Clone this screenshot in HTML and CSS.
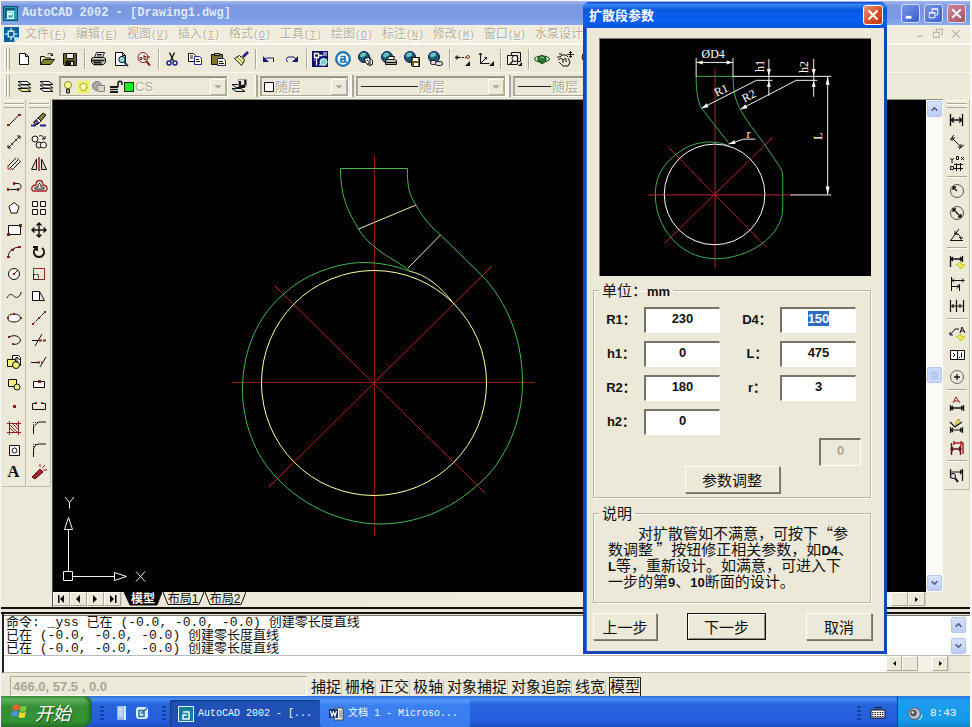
FILE: index.html
```html
<!DOCTYPE html>
<html lang="zh-CN">
<head>
<meta charset="utf-8">
<title>AutoCAD 2002 - [Drawing1.dwg]</title>
<link rel="stylesheet" href="styles.css">
</head>
<body>
<header class="titlebar">
  <svg class="app-logo" viewBox="0 0 16 16"><rect width="16" height="16" fill="#0b4a66"/><rect x="1" y="1" width="14" height="14" fill="#2c9ab5"/><path d="M2 2h11v2H4v9H2z" fill="#0c5673"/><path d="M5 6h6v7H5V9h4V8H5z" fill="none" stroke="#e9fbff" stroke-width="1.500"/></svg>
  <h1>AutoCAD 2002 - [Drawing1.dwg]</h1>
  <div class="window-buttons">
    <button type="button" aria-label="最小化"><svg viewBox="0 0 18 18"><path d="M4 13h6" stroke="#fff" stroke-width="3"/></svg></button>
    <button type="button" aria-label="还原"><svg viewBox="0 0 18 18"><path d="M7.500 7V4.500h6v6H11M4.500 8.500h6v5h-6zM4 8h7M7 4h7" fill="none" stroke="#fff"/></svg></button>
    <button type="button" class="close" aria-label="关闭"><svg viewBox="0 0 18 18"><path d="M4.500 4.500l9 9M13.500 4.500l-9 9" stroke="#fff" stroke-width="2"/></svg></button>
  </div>
</header>

<nav class="menubar">
  <svg class="doc-logo" viewBox="0 0 16 16"><path d="M0 0h16v11l-5 5H0z" fill="#0a5f96"/><path d="M16 11h-5v5z" fill="#d8ecf8"/><path d="M4.500 4.500h6v6h-6zM7.500 1v3M7.500 11v3M1 7.500h3M11 7.500h3" fill="none" stroke="#c8f0ff" stroke-width="1.400"/></svg>
  <button type="button">文件<span>(<u>F</u>)</span></button>
  <button type="button">编辑<span>(<u>E</u>)</span></button>
  <button type="button">视图<span>(<u>V</u>)</span></button>
  <button type="button">插入<span>(<u>I</u>)</span></button>
  <button type="button">格式<span>(<u>O</u>)</span></button>
  <button type="button">工具<span>(<u>T</u>)</span></button>
  <button type="button">绘图<span>(<u>D</u>)</span></button>
  <button type="button">标注<span>(<u>N</u>)</span></button>
  <button type="button">修改<span>(<u>M</u>)</span></button>
  <button type="button">窗口<span>(<u>W</u>)</span></button>
  <button type="button">水泵设计</button>
  <svg class="doc-controls" viewBox="0 0 50 12"><g fill="none" stroke="#fff"><path d="M4 9.500h6M23.500 4V2.500h6v5H28M20.500 5.500h6v5h-6zM39.500 3.500l7 7M46.500 3.500l-7 7"/></g><path d="M3 8.500h6M22.500 4V1.500h6v5H27M19.500 4.500h6v5h-6z" fill="none" stroke="#bdb9aa" stroke-width="1.300"/><path d="M38.500 2.500l7 7M45.500 2.500l-7 7" stroke="#bdb9aa" stroke-width="1.600"/></svg>
</nav>

<div class="toolbar">
  <i class="grip"></i>
  <button type="button" aria-label="新建"><svg class="i" viewBox="0 0 18 18"><path d="M4.500 3.500h6l3 3v8h-9z" fill="#fff"/><path d="M10.500 3.500v3h3"/></svg></button>
  <button type="button" aria-label="打开"><svg class="i" viewBox="0 0 18 18"><path d="M2.500 14.500v-8h4l1 1.500h5v2" fill="#f4f0a0"/><path d="M2.500 14.500l3-5h11l-4 5z" fill="#87832a"/><path d="M9.500 4.500c2-2 4-1 5 1m0-2v2h-2"/></svg></button>
  <button type="button" aria-label="保存"><svg class="i" viewBox="0 0 18 18"><path d="M2.500 3.500h13v12h-12l-1-1z" fill="#6b6a23"/><path d="M5.500 3.500h7v5h-7z" fill="#eee"/><path d="M5 11h8v4H5z" fill="#111"/><path d="M10 12h2v3h-2z" fill="#eee" stroke="none"/></svg></button>
  <i class="sep"></i>
  <button type="button" aria-label="打印"><svg class="i" viewBox="0 0 18 18"><path d="M5.500 7.500l2-5h8l-2 5z" fill="#fff"/><path d="M2.500 8.500l2-1h10l2 1v4l-2 2h-10l-2-2z" fill="#c9c5b3"/><path d="M2.500 10.500h13M4.500 12.500h8M5 14.500h9" stroke-width="1.500"/><path d="M8 4.500h5M7.500 6h5"/></svg></button>
  <button type="button" aria-label="打印预览"><svg class="i" viewBox="0 0 18 18"><path d="M3.500 2.500h7l3 3v10h-10z" fill="#fff"/><path d="M10.500 2.500v3h3"/><circle cx="10" cy="9.500" r="3.200" fill="#8fd8dc"/><path d="M12 12l4 4" stroke="#174d6b" stroke-width="2"/></svg></button>
  <button type="button" aria-label="查找"><svg class="i" viewBox="0 0 18 18"><circle cx="8" cy="7.500" r="5" fill="#fff" stroke="#7e1616"/><path d="M5 7.500h2v2H5zM9 4.500v5h2v-3H9M12 7h3" stroke="#7e1616"/><path d="M11 11l4 4.500" stroke="#a01c1c" stroke-width="2"/></svg></button>
  <i class="sep"></i>
  <button type="button" aria-label="剪切"><svg class="i" viewBox="0 0 18 18"><path d="M6.500 2.500l4 8.500M11.500 2.500l-4 8.500" stroke-width="1.300"/><circle cx="6" cy="13" r="2" stroke="#20248c" stroke-width="1.500"/><circle cx="12" cy="13" r="2" stroke="#20248c" stroke-width="1.500"/></svg></button>
  <button type="button" aria-label="复制"><svg class="i" viewBox="0 0 18 18"><path d="M2.500 3.500h5l2 2v6h-7z" fill="#fff"/><path d="M8.500 6.500h5l2 2v6h-7z" fill="#fff" stroke="#20248c"/><path d="M4 6h3M4 8h3M10 9.500h3M10 11.500h4"/></svg></button>
  <button type="button" aria-label="粘贴"><svg class="i" viewBox="0 0 18 18"><path d="M2.500 4.500h11v10h-11z" fill="#7c772c"/><path d="M5.500 5.500v-2h5v2z" fill="#ccc47c"/><path d="M8.500 8.500h6l2 2v5h-8z" fill="#fff" stroke="#20248c"/><path d="M10 11.500h4M10 13.500h5"/></svg></button>
  <button type="button" aria-label="特性匹配"><svg class="i" viewBox="0 0 18 18"><path d="M2.500 8.500l5-3 5 5-3 5z" fill="#ffffc0"/><path d="M5 7l6 6M4 9.500l5 5" stroke="#77712c"/><path d="M10 8l6-6" stroke="#20248c" stroke-width="2.500"/><path d="M9 6.500l3.500 3.500" stroke="#8c8742" stroke-width="2"/></svg></button>
  <i class="sep"></i>
  <button type="button" aria-label="放弃"><svg class="i" viewBox="0 0 18 18"><path d="M3 6v6h6z" fill="#171780" stroke="none"/><path d="M6 8h7.500v4" stroke="#171780"/></svg></button>
  <button type="button" aria-label="重做"><svg class="i" viewBox="0 0 18 18"><path d="M15 6v6H9z" fill="#171780" stroke="none"/><path d="M13 9l-2-2H5L3.500 8.500v2L5 12" stroke="#171780"/></svg></button>
  <i class="sep"></i>
  <button type="button" aria-label="设计中心"><svg class="i" viewBox="0 0 18 18"><path d="M1 1h16v16H1z" fill="#10106c" stroke="none"/><path d="M3.500 3.500h4v4h-4zM7.500 5.500h4M5.500 7.500v8" stroke="#fff" stroke-width="1.300"/><path d="M12 3h4M12 5h4M3 10h1M8 15h2" stroke="#fff"/><circle cx="12.500" cy="12" r="3.500" fill="#7bd1cf" stroke="#e8ffff"/></svg></button>
  <button type="button" aria-label="今日"><svg class="i" viewBox="0 0 18 18"><circle cx="9" cy="9" r="6.800" fill="#fff" stroke="#1c73bd" stroke-width="2.300"/><path d="M6.500 6.500h4.500v5.500H7V9.200h4M11 12h2" stroke="#1c73bd" stroke-width="1.700"/></svg></button>
  <button type="button" aria-label="网上会议"><svg class="i" viewBox="0 0 18 18"><circle cx="7" cy="7" r="5.500" fill="#155a75" stroke="#101860"/><path d="M3 5c2-3 5-3 6-1s-2 2-3 3-3 0-3-2" fill="#66c3b9" stroke="none"/><path d="M7.500 8.500l4-1 4 3v4l-3 1-4-3z" fill="#fff"/><path d="M10 10l3 3M13 7v9M10 15l2-2"/></svg></button>
  <button type="button" aria-label="发布"><svg class="i" viewBox="0 0 18 18"><circle cx="7" cy="7" r="5.500" fill="#155a75" stroke="#101860"/><path d="M3 5c2-3 5-3 6-1s-2 2-3 3-3 0-3-2" fill="#66c3b9" stroke="none"/><path d="M7.500 9.500l1-3h6l-1 3" fill="#fff"/><path d="M5.500 10.500l2-1h7l2 1v4h-11z" fill="#ddd9c8"/><path d="M6 12.500h10" stroke-width="1.500"/></svg></button>
  <button type="button" aria-label="电子传递"><svg class="i" viewBox="0 0 18 18"><circle cx="7" cy="7" r="5.500" fill="#155a75" stroke="#101860"/><path d="M3 5c2-3 5-3 6-1s-2 2-3 3-3 0-3-2" fill="#66c3b9" stroke="none"/><path d="M8.500 7.500h8v9h-7l-1-1z" fill="#755b25"/><path d="M10 8h5v3h-5zM11 13h4v3h-4z" fill="#fff" stroke="none"/></svg></button>
  <button type="button" aria-label="超级链接"><svg class="i" viewBox="0 0 18 18"><circle cx="8" cy="7" r="5.500" fill="#155a75" stroke="#101860"/><path d="M4 5c2-3 5-3 6-1s-2 2-3 3-3 0-3-2" fill="#66c3b9" stroke="none"/><rect x="4.500" y="10.500" width="6" height="4" rx="2" fill="#ddd"/><rect x="9.500" y="11.500" width="7" height="4" rx="2" fill="#ddd"/></svg></button>
  <i class="sep"></i>
  <button type="button" aria-label="临时追踪"><svg class="i" viewBox="0 0 18 18"><path d="M1 7.500h4M3 5.500v4" stroke-width="1.300"/><path d="M5 7.500h9" stroke-dasharray="2 1"/><circle cx="14" cy="7" r="1.500" stroke="#8a3a1b"/><path d="M16 11v5h-5z" fill="#111" stroke="none"/></svg></button>
  <button type="button" aria-label="坐标系"><svg class="i" viewBox="0 0 18 18"><path d="M3.500 3v10.500h9M3.500 13.500l6-6M2 5l1.500-2L5 5M7.500 7.500h2v2"/><path d="M17 11v5h-5z" fill="#111" stroke="none"/></svg></button>
  <i class="sep"></i>
  <button type="button" aria-label="缩放窗口"><svg class="i" viewBox="0 0 18 18"><path d="M6.500 2.500h9v9h-9z"/><path d="M2.500 5.500h10v9h-10z" fill="#f5f3e4"/><circle cx="10" cy="8.500" r="3"/><path d="M8 11l-3 3" stroke-width="1.500"/><path d="M17 12v4h-4z" fill="#111" stroke="none"/></svg></button>
  <i class="sep"></i>
  <button type="button" aria-label="三维动态观察"><svg class="i" viewBox="0 0 18 18"><ellipse cx="9" cy="9" rx="7.500" ry="3" stroke="#123d12"/><path d="M5 8l4-3 4 3v3l-4 3-4-3z" fill="#267a32" stroke="#0e4a18"/><path d="M7 8l2-1 2 1" stroke="#8cd990"/></svg></button>
  <button type="button" aria-label="实时平移"><svg class="i" viewBox="0 0 18 18"><path d="M1 7h3l2-2h4l2 2M3 4h3M2 10l3-2 2 2 3-2M3 12l4 4h5l2-4-2-4M7 10v3M10 9v3"/><path d="M14.500 1v7M11 4.500h7M13 2.500h3M13 6.500h3"/></svg></button>
  <button type="button" aria-label="实时缩放"><svg class="i" viewBox="0 0 18 18"><circle cx="7" cy="7" r="4"/><path d="M10 10l5 5" stroke-width="2"/></svg></button>
</div>

<div class="toolbar props">
  <i class="grip"></i>
  <button type="button" aria-label="图层"><svg class="i" viewBox="0 0 18 18"><path d="M3 4.500h9l4 3H7zM3 8h9l4 3H7z" fill="#fff"/><path d="M3 11.500h9l4 3H7z" fill="#f8f36f"/></svg></button>
  <button type="button" aria-label="当前图层"><svg class="i" viewBox="0 0 18 18"><path d="M2 4.500h9l4 3H6zM2 8h9l4 3H6z" fill="#fff"/><path d="M2 11.500h9l4 3H6z" fill="#fff"/></svg></button>
  <div class="combo layer">
    <svg class="layer-state" viewBox="0 0 74 16"><circle cx="7" cy="6" r="3.500" fill="#ffff91" stroke="#8b862d"/><path d="M5.500 10h3v4h-3z" fill="#aba65a" stroke="#222"/><rect x="17" y="2" width="11" height="12" fill="#f4ef6d"/><circle cx="22.500" cy="8" r="3.500" fill="#ffffa8" stroke="#77722b" stroke-dasharray="2 1"/><circle cx="36" cy="7" r="4.500" fill="#aaa" stroke="#777"/><path d="M36.500 6.500h7v6h-7z" fill="#d8d4c5" stroke="#888"/><path d="M49 7h8v7h-8z" fill="#171717"/><path d="M49 9.500h8M49 11.500h8" stroke="#d0cdbd"/><path d="M57 8V4.500c0-3 4-3 4 0V6" fill="none" stroke="#171717" stroke-width="1.500"/><rect x="63.500" y="3.500" width="9" height="9" fill="#00f322" stroke="#173017"/></svg>
    <select aria-label="图层"><option>CS</option></select>
    <svg class="drop" viewBox="0 0 16 16"><path d="M4 6h8l-4 4z"/></svg>
  </div>
  <button type="button" aria-label="上一个图层"><svg class="i" viewBox="0 0 18 18"><path d="M1 7.500h9l4 3H5zM1 11.500h9l4 3H5z" fill="#d6e8e4"/><path d="M7.500 2.500h8v7h-8z" fill="#e6e3d2" stroke="#999"/><path d="M10 10c4-1 5-3 4-7M9 4v5h5" stroke-width="2"/></svg></button>
  <i class="grip thin"></i>
  <div class="combo color">
    <svg class="swatch" viewBox="0 0 12 12"><path d="M1.500 1.500h9v9h-9z" fill="#fff" stroke="#111"/></svg>
    <select aria-label="颜色"><option>随层</option></select>
    <svg class="drop" viewBox="0 0 16 16"><path d="M4 6h8l-4 4z"/></svg>
  </div>
  <i class="grip thin"></i>
  <div class="combo line">
    <span class="sample"></span>
    <select aria-label="线型"><option>随层</option></select>
    <svg class="drop" viewBox="0 0 16 16"><path d="M4 6h8l-4 4z"/></svg>
  </div>
  <i class="grip thin"></i>
  <div class="combo weight">
    <span class="sample short"></span>
    <select aria-label="线宽"><option>随层</option></select>
    <svg class="drop" viewBox="0 0 16 16"><path d="M4 6h8l-4 4z"/></svg>
  </div>
</div>

<main class="workspace">
  <div class="palette">
    <i class="hgrip"></i>
    <button type="button" aria-label="直线"><svg class="i" viewBox="0 0 18 18"><path d="M4 14L14 4"/><path d="M2 13h3v2H2zM13 3h3v2h-3z" class="r"/></svg></button>
    <button type="button" aria-label="构造线"><svg class="i" viewBox="0 0 18 18"><path d="M3 15L15 3M3 12v3h3M12 3h3v3"/><path d="M6 10h2v2H6zM10 6h2v2h-2z" class="r"/></svg></button>
    <button type="button" aria-label="多线"><svg class="i" viewBox="0 0 18 18"><path d="M3 11l8-8M7 15l8-8M5 13l8-8"/><path d="M3 10v4h4M12 3l4 4" stroke="#922"/></svg></button>
    <button type="button" aria-label="多段线"><svg class="i" viewBox="0 0 18 18"><path d="M3 12.500h10c4 0 4-6 0-6H9"/><path d="M2 11h2v3H2zM12 11h2v3h-2zM8 5h2v3H8z" class="r"/></svg></button>
    <button type="button" aria-label="多边形"><svg class="i" viewBox="0 0 18 18"><path d="M9 3.500l5 4-2 6.500H6L4 7.500z" fill="#fff"/></svg></button>
    <button type="button" aria-label="矩形"><svg class="i" viewBox="0 0 18 18"><path d="M3.500 4.500h12v9h-12z" fill="#fff"/><path d="M2 12h3v3H2zM14 3h3v3h-3z" class="r"/></svg></button>
    <button type="button" aria-label="圆弧"><svg class="i" viewBox="0 0 18 18"><path d="M3 14c1-7 5-9 11-10"/><path d="M2 13h3v2H2zM6 6h3v2H6zM13 3h3v2h-3z" class="r"/></svg></button>
    <button type="button" aria-label="圆"><svg class="i" viewBox="0 0 18 18"><circle cx="9" cy="9" r="5.500" fill="#f8f8f0"/><path d="M9 9l4-4"/><path d="M8 8h2v2H8z" class="r"/></svg></button>
    <button type="button" aria-label="样条曲线"><svg class="i" viewBox="0 0 18 18"><path d="M2 11c5-9 7 2 11-1 2-1 3-3 3-5"/></svg></button>
    <button type="button" aria-label="椭圆"><svg class="i" viewBox="0 0 18 18"><ellipse cx="9" cy="9" rx="6.500" ry="4" fill="#fff"/><path d="M2 8h2v2H2zM8 4h2v2H8zM15 8h2v2h-2z" class="r"/></svg></button>
    <button type="button" aria-label="椭圆弧"><svg class="i" viewBox="0 0 18 18"><path d="M4 6c8-4 13 2 11 5-2 2-5 3-8 2"/><path d="M3 5h2v2H3zM7 12h2v2H7z" class="r"/></svg></button>
    <button type="button" aria-label="插入块"><svg class="i" viewBox="0 0 18 18"><path d="M7.500 2.500h6l2 2v8h-8z" fill="#fff"/><path d="M2.500 6.500h8v7h-8z" fill="#f4ef79"/><circle cx="11" cy="12" r="3.500" fill="#f4ef79"/><path d="M12 5v5M9 7l3-3 3 3"/></svg></button>
    <button type="button" aria-label="创建块"><svg class="i" viewBox="0 0 18 18"><path d="M3.500 4.500h8v7h-8z" fill="#f4ef79"/><circle cx="12" cy="12" r="3" fill="#f4ef79"/></svg></button>
    <button type="button" aria-label="点"><svg class="i" viewBox="0 0 18 18"><path d="M8 8h3v3H8z" class="r"/></svg></button>
    <button type="button" aria-label="图案填充"><svg class="i" viewBox="0 0 18 18"><path d="M4.500 2v14M13.500 2v14M2 4.500h14M2 13.500h14M5 6l7 7M5 9l4 4M8 5l5 5M11 5l2 2" stroke="#8c2020"/></svg></button>
    <button type="button" aria-label="面域"><svg class="i" viewBox="0 0 18 18"><path d="M4.500 4.500h10v10h-10z" fill="#fff"/><circle cx="9.500" cy="9.500" r="2.500"/></svg></button>
    <button type="button" class="text-tool" aria-label="多行文字">A</button>
  </div>
  <div class="palette">
    <i class="hgrip"></i>
    <button type="button" aria-label="删除"><svg class="i" viewBox="0 0 18 18"><path d="M8 7l5-5 3 2-5 6z" fill="#77803c"/><path d="M5 10l3-3 3 3-4 4z" fill="#fff"/><path d="M3.500 11l3-2 2 3-3 2z" fill="#9353a8"/><path d="M1 14.500h5M10 14.500h6" stroke="#20248c" stroke-width="2"/></svg></button>
    <button type="button" aria-label="复制对象"><svg class="i" viewBox="0 0 18 18"><circle cx="5" cy="6" r="3" fill="#fff"/><circle cx="9" cy="12" r="3"/><circle cx="13.500" cy="12" r="3" fill="#fff"/><path d="M9 3c3-1 4 0 5 3m1-3v3h-3"/></svg></button>
    <button type="button" aria-label="镜像"><svg class="i" viewBox="0 0 18 18"><path d="M6.500 4v10.500h-5zM11.500 4v10.500h5z" fill="#ddd9c9"/><path d="M9 2v14" stroke="#922" stroke-width="1.500"/></svg></button>
    <button type="button" aria-label="偏移"><svg class="i" viewBox="0 0 18 18"><path d="M3 14c-3-3 0-6 3-6 0-6 7-6 7 0 4 0 5 4 3 6z" stroke="#922" stroke-width="1.300"/><path d="M5 12c-1-1 0-2 3-2 0-5 3-5 3 0 3 0 4 1 3 2z"/></svg></button>
    <button type="button" aria-label="阵列"><svg class="i" viewBox="0 0 18 18"><path d="M2.500 2.500h5v5h-5zM10.500 2.500h5v5h-5zM2.500 10.500h5v5h-5zM10.500 10.500h5v5h-5z" fill="#f8f6ec"/></svg></button>
    <button type="button" aria-label="移动"><svg class="i" viewBox="0 0 18 18"><path d="M9 2v14M2 9h14M6.500 4.500L9 2l2.500 2.500M6.500 13.500L9 16l2.500-2.500M4.500 6.500L2 9l2.500 2.500M13.500 6.500L16 9l-2.500 2.500" stroke-width="1.400"/></svg></button>
    <button type="button" aria-label="旋转"><svg class="i" viewBox="0 0 18 18"><path d="M12 5c4 3 2 9-3 9s-7-6-3-9M3 4h4v4" stroke-width="1.800"/></svg></button>
    <button type="button" aria-label="比例"><svg class="i" viewBox="0 0 18 18"><path d="M3.500 3.500h11v11h-11z" stroke="#922"/><path d="M3.500 9.500h5v5h-5z" stroke-dasharray="2 1"/></svg></button>
    <button type="button" aria-label="拉伸"><svg class="i" viewBox="0 0 18 18"><path d="M2.500 4.500h7v9h-7z" fill="#fff"/><path d="M9.500 4.500l5 9h-5"/></svg></button>
    <button type="button" aria-label="拉长"><svg class="i" viewBox="0 0 18 18"><path d="M3 15l6-6M9 9l6-6" stroke-dasharray="3 1"/><path d="M2 14h2v2H2zM8 8h2v2H8zM14 2h2v2h-2z" class="r"/></svg></button>
    <button type="button" aria-label="修剪"><svg class="i" viewBox="0 0 18 18"><path d="M2 9.500h6M5 15L12 3"/><path d="M9 9.500h8" stroke="#922" stroke-width="2" stroke-dasharray="3 1"/></svg></button>
    <button type="button" aria-label="延伸"><svg class="i" viewBox="0 0 18 18"><path d="M1 9.500h6M10 14L16 4"/><path d="M7 9.500h5" stroke="#922" stroke-width="2" stroke-dasharray="3 1"/></svg></button>
    <button type="button" aria-label="打断于点"><svg class="i" viewBox="0 0 18 18"><path d="M3.500 6.500h11v6h-11z" fill="#fff"/><path d="M8 5h3v3H8z" class="r"/></svg></button>
    <button type="button" aria-label="打断"><svg class="i" viewBox="0 0 18 18"><path d="M5 6.500H2.500v6h13v-6H13"/><path d="M5 5h2v2H5zM11 5h2v2h-2z" class="r"/></svg></button>
    <button type="button" aria-label="倒角"><svg class="i" viewBox="0 0 18 18"><path d="M3.500 15V8l5-5H16"/><path d="M3.500 8V3.500H8" stroke-dasharray="1 1"/></svg></button>
    <button type="button" aria-label="圆角"><svg class="i" viewBox="0 0 18 18"><path d="M3.500 16v-6c0-4 2-7 6-7H16"/><path d="M3.500 8V3.500H8" stroke-dasharray="1 1"/></svg></button>
    <button type="button" aria-label="分解"><svg class="i" viewBox="0 0 18 18"><path d="M2 14l8-8 3 3-8 7z" fill="#a62727" stroke="#501010"/><path d="M12 5l3-3M13 7h4M10 4V1" stroke="#922"/></svg></button>
  </div>

  <section class="document">
    <div class="viewport">
      <svg class="drawing" role="img" aria-label="蜗壳扩散段图形">
        <g transform="translate(-53 -100)" fill="none">
          <path d="M374.500 155v381M232 382.500h303" stroke="#941616"/>
          <path d="M275 286l210 207M491 267L269 487" stroke="#b52020"/>
          <circle cx="374" cy="383" r="112.500" stroke="#ffffa5"/>
          <path d="M358.500 229L416 205M408 268L440.500 235M409 271C427 275 440 286 454 304" stroke="#f0efaa"/>
          <path d="M409 270C395 260 385 256 375 247C368 242 362 235 358.500 229C350 214 340.500 200 340.500 168.500H407.500C407 184 409 195 416 205C424 220 432 227 440.500 235L481.500 275C508 303 522.500 340 522.500 383C522.500 420 506 462 476.500 486C450 510 415 524 380 524C345 524 305 508 277 478C254 455 242.500 420 242.500 390C242.500 350 258 315 285 293C310 270 345 262.500 363 262.500C380 262.500 396 266 409 271" stroke="#41b954"/>
          <g stroke="#f2f2f2"><path d="M63.500 571.500h9v9h-9zM73 576.500h41M114.500 572.500v8l12-4zM68.500 571v-41M64.500 529.500h8l-4-12zM65 497l4.500 5.500 4.500-5.500M69.500 502.500v6M136 571.500l9 10M145 571.500l-9 10"/></g>
        </g>
      </svg>
      <div class="vscroll">
        <button type="button" class="sbtn" aria-label="向上滚动"><svg viewBox="0 0 16 16"><path d="M4.500 10L8 6.500l3.500 3.500"/></svg></button>
        <i class="space up"></i>
        <i class="thumb"></i>
        <i class="space down"></i>
        <button type="button" class="sbtn" aria-label="向下滚动"><svg viewBox="0 0 16 16"><path d="M4.500 6L8 9.500 11.500 6"/></svg></button>
      </div>
    </div>
    <div class="tabs">
      <button type="button" class="raised" aria-label="第一个"><svg viewBox="0 0 15 13"><path d="M4 2v8h1.500V2zM10 2v8L6 6z"/></svg></button>
      <button type="button" class="raised" aria-label="上一个"><svg viewBox="0 0 15 13"><path d="M9 2v8L5 6z"/></svg></button>
      <button type="button" class="raised" aria-label="下一个"><svg viewBox="0 0 15 13"><path d="M5 2v8l4-4z"/></svg></button>
      <button type="button" class="raised" aria-label="最后一个"><svg viewBox="0 0 15 13"><path d="M5 2v8l4-4zM10 2v8h1.500V2z"/></svg></button>
      <button type="button" class="tab active"><svg viewBox="0 0 38 14"><path d="M0 0h38l-5 13H6z"/></svg><span>模型</span></button>
      <button type="button" class="tab"><svg viewBox="0 0 42 14"><path d="M1 0l5 12.500h31L42 0"/></svg><span>布局1</span></button>
      <button type="button" class="tab"><svg viewBox="0 0 42 14"><path d="M1 0l5 12.500h31L42 0"/></svg><span>布局2</span></button>
      <i class="track"></i>
      <i class="raised"></i>
      <button type="button" class="raised" aria-label="向右滚动"><svg viewBox="0 0 15 13"><path d="M6 4v5l3-2.500z"/></svg></button>
      <i class="corner"></i>
    </div>
  </section>

  <div class="palette dims">
    <i class="hgrip"></i>
    <button type="button" aria-label="线性标注"><svg class="i" viewBox="0 0 18 18"><path d="M2.500 3v12M14.500 3v12M3 9h11M6 6.500L3 9l3 2.500M11 6.500L14 9l-3 2.500" stroke-width="1.300"/></svg></button>
    <button type="button" aria-label="对齐标注"><svg class="i" viewBox="0 0 18 18"><path d="M2 7l4-5M11 16l5-4M4 5l9 9M4 8V5h3M10 14h3v-3"/></svg></button>
    <button type="button" aria-label="坐标标注"><svg class="i" viewBox="0 0 18 18"><path d="M2 3l2 2 2-2M4 5v3M13 2l3 3M16 2l-3 3M2.500 11.500h3v3h-3zM8.500 1.500h2v3h-2zM6 13.500h9M8.500 8v8M12.500 8v8M6 9.500h9"/></svg></button>
    <i class="hsep"></i>
    <button type="button" aria-label="半径标注"><svg class="i" viewBox="0 0 18 18"><circle cx="9" cy="9" r="6.500" stroke="#555"/><path d="M9 9L5 5M5 8V5h3" stroke-width="1.300"/></svg></button>
    <button type="button" aria-label="直径标注"><svg class="i" viewBox="0 0 18 18"><circle cx="9" cy="9" r="6.500" stroke="#555"/><path d="M5 5l8 8M5 8V5h3M10 13h3v-3" stroke-width="1.300"/></svg></button>
    <button type="button" aria-label="角度标注"><svg class="i" viewBox="0 0 18 18"><path d="M2 14.500h13M3 14l8-11M6 7.500c4 0 7 2 7 6M7 5v3h3M11 11l2 2 2-2"/></svg></button>
    <i class="hsep"></i>
    <button type="button" aria-label="快速标注"><svg class="i" viewBox="0 0 18 18"><path d="M2.500 3v11M14.500 3v6M3 6h11M5 4L3 6l2 2M12 4l2 2-2 2" stroke-width="1.300"/><path d="M8 12l5-3v2l4 1-5 4v-3z" fill="#fbf84d" stroke="#c7c329"/></svg></button>
    <button type="button" aria-label="基线标注"><svg class="i" viewBox="0 0 18 18"><path d="M3.500 2v14M11.500 9v7M4 5.500h12M4 11.500h7M6 3.500L4 5.500l2 2M14 3.500l2 2-2 2M9 9.500l2 2-2 2"/></svg></button>
    <button type="button" aria-label="连续标注"><svg class="i" viewBox="0 0 18 18"><path d="M2.500 3v12M8.500 3v12M15.500 3v12M3 9h12M5 7v4M12 7v4" stroke-width="1.200"/></svg></button>
    <i class="hsep"></i>
    <button type="button" aria-label="快速引线"><svg class="i" viewBox="0 0 18 18"><path d="M2 11l5-6h4M2 8v3h3M12 9l2-6 3 6M13 7h3"/><path d="M8 13l5-3v2l4 1-5 4v-3z" fill="#fbf84d" stroke="#c7c329"/></svg></button>
    <button type="button" aria-label="公差"><svg class="i" viewBox="0 0 18 18"><path d="M2.500 4.500h14v9h-14zM9.500 4.500v9" fill="#fff"/><path d="M5 7l2 2-2 2M13.500 6.500v5M11 11.500h1"/></svg></button>
    <button type="button" aria-label="圆心标记"><svg class="i" viewBox="0 0 18 18"><circle cx="9" cy="9" r="6.500" stroke="#666"/><path d="M6 9h6M9 6v6" stroke-width="1.300"/></svg></button>
    <i class="hsep"></i>
    <button type="button" aria-label="编辑标注"><svg class="i" viewBox="0 0 18 18"><path d="M5 8l3-6 4 6M6 6h5" stroke="#922"/><path d="M2.500 10v6M15.500 10v6M3 13h12M5 11l-2 2 2 2M13 11l2 2-2 2" stroke-width="1.300"/></svg></button>
    <button type="button" aria-label="编辑标注文字"><svg class="i" viewBox="0 0 18 18"><path d="M7 7l3-5 2 1-3 5z" fill="#f0ec58" stroke="#aaa530"/><path d="M2 5l5 5 7-5M2.500 10v6M14.500 10v6M3 13h11M5 11l-2 2 2 2M12 11l2 2-2 2" stroke-width="1.200"/></svg></button>
    <button type="button" aria-label="标注更新"><svg class="i" viewBox="0 0 18 18"><path d="M6 4h9v11M6 2v4M13 2v5" stroke="#b11b28" stroke-width="1.500"/><path d="M3.500 4v12M12.500 7v9M3 10h10M5 8l-2 2 2 2M11 8l2 2-2 2" stroke="#601018" stroke-width="1.400"/></svg></button>
    <i class="hsep"></i>
    <button type="button" aria-label="标注样式"><svg class="i" viewBox="0 0 18 18"><path d="M2.500 3v9M14.500 3v12M3 6h11M12 4l2 2-2 2" stroke-width="1.200"/><circle cx="5" cy="10" r="2.500" fill="#ddd"/><path d="M7 12l3 4" stroke-width="2"/></svg></button>
  </div>
</main>

<div class="splitter"></div>

<section class="command">
  <div class="history">
    <div class="log">
      <p>命令: _yss 已在 (-0.0, -0.0, -0.0) 创建零长度直线</p>
      <p>已在 (-0.0, -0.0, -0.0) 创建零长度直线</p>
      <p>已在 (-0.0, -0.0, -0.0) 创建零长度直线</p>
    </div>
    <div class="vscroll small">
      <button type="button" class="sbtn" aria-label="向上滚动"><svg viewBox="0 0 16 16"><path d="M4.500 10L8 6.500l3.500 3.500"/></svg></button>
      <button type="button" class="sbtn" aria-label="向下滚动"><svg viewBox="0 0 16 16"><path d="M4.500 6L8 9.500 11.500 6"/></svg></button>
    </div>
  </div>
  <div class="prompt">
    <input type="text" aria-label="命令行">
    <button type="button" class="raised" aria-label="向左滚动"><svg viewBox="0 0 15 13"><path d="M9 4v5L6 6.500z"/></svg></button>
    <i class="raised"></i>
    <i class="track"></i>
    <button type="button" class="raised" aria-label="向右滚动"><svg viewBox="0 0 15 13"><path d="M6 4v5l3-2.500z"/></svg></button>
  </div>
</section>

<footer class="status">
  <output class="coords">466.0, 57.5 , 0.0</output>
  <button type="button">捕捉</button>
  <button type="button">栅格</button>
  <button type="button">正交</button>
  <button type="button">极轴</button>
  <button type="button">对象捕捉</button>
  <button type="button">对象追踪</button>
  <button type="button">线宽</button>
  <button type="button" class="on">模型</button>
</footer>

<footer class="taskbar">
  <button type="button" class="start">
    <svg viewBox="0 0 18 18"><path d="M3 3c2-1 4-1 6 0L8 8C6 7 4 7 2 8z" fill="#e9602b"/><path d="M10 3.500c2 1 4 1 6 0l-1 5c-2 1-4 1-6 0z" fill="#88c540"/><path d="M2 9c2-1 4-1 6 0l-1 5c-2-1-4-1-6 0z" fill="#4a91e9"/><path d="M9 9.500c2 1 4 1 6 0l-1 5c-2 1-4 1-6 0z" fill="#fbd43b"/></svg>
    <em>开始</em>
  </button>
  <div class="quick">
    <i class="dots"></i>
    <button type="button" aria-label="记事本"><svg viewBox="0 0 16 16"><path d="M3 1h9v14H3z" fill="#8fb9ed"/><path d="M4 3h5M4 5h5M4 7h5M4 9h5M4 11h5" stroke="#e9f5ff"/><path d="M10 1h2v14h-2z" fill="#d5e8fb"/></svg></button>
    <button type="button" aria-label="显示桌面"><svg viewBox="0 0 16 16"><rect x="2" y="2" width="12" height="12" rx="3" fill="#d9efff"/><path d="M5 5.500h5v6H5zM7 9l6-6" stroke="#2c6ea4" fill="none" stroke-width="1.500"/></svg></button>
    <i class="dots"></i>
  </div>
  <button type="button" class="task current"><svg viewBox="0 0 16 16"><rect width="16" height="16" fill="#d4f4ff"/><rect x="1" y="1" width="14" height="14" fill="#197c99"/><path d="M5 6h6v7H5V9h4" fill="none" stroke="#e9fbff" stroke-width="1.500"/></svg><span>AutoCAD 2002 - [...</span></button>
  <button type="button" class="task"><svg viewBox="0 0 16 16"><path d="M6 2h9v12H6z" fill="#fff" stroke="#445"/><path d="M11 5h3M11 7h3M11 9h3M11 11h3" stroke="#667"/><path d="M1 3h9v9H1z" fill="#18307d"/><path d="M2.500 5l1.500 5 1.500-4L7 10l1.500-5" fill="none" stroke="#fff" stroke-width="1.200"/></svg><span>文档 1 - Microso...</span></button>
  <div class="lang"><i class="dots"></i><svg viewBox="0 0 16 16"><path d="M4 3c1-2 6 1 8-1" fill="none" stroke="#111"/><path d="M1 5h14v8H1z" fill="#fff" stroke="#111"/><path d="M2 7.500h12M2 9.500h12M2 11.500h12" stroke="#222" stroke-dasharray="1.500 1"/></svg></div>
  <div class="tray"><svg viewBox="0 0 16 16"><circle cx="7" cy="8" r="5.500" fill="#b9c4cf" stroke="#56677c"/><circle cx="6" cy="7.500" r="3" fill="#554b50"/><circle cx="5.500" cy="7" r="1.200" fill="#e6e6e6"/><path d="M11 14c2-1 3-3 3-5" fill="none" stroke="#bce4ff"/></svg><time>8:43</time></div>
</footer>

<form class="dialog" role="dialog" aria-labelledby="dialog-title">
  <div class="dialog-title">
    <h2 id="dialog-title">扩散段参数</h2>
    <button type="button" aria-label="关闭"><svg viewBox="0 0 18 18"><path d="M4.500 4.500l9 9M13.500 4.500l-9 9" stroke="#fff" stroke-width="2"/></svg></button>
  </div>
  <div class="dialog-body">
    <svg class="preview" viewBox="599 38 272 238" role="img" aria-label="参数示意图">
      <g fill="none">
        <path d="M714.500 68v200M647 194.500h143M668 147l98 100M772 137L664 243" stroke="#b4222b"/>
        <path d="M728 142L714.500 125C708 117 705 112 700.500 107C697 100 695.500 90 695.500 75.500H732.500C732.500 90 735 100 740 109C747 122 755 131 763 142L780 167Q782.500 171 782.500 176V207C782.500 237 747 258.500 715 258.500C680 258.500 654.500 228 654.500 194C654.500 175 664 161 680 150.500C692 142 710 138 728 145" stroke="#43ad53"/>
        <circle cx="714" cy="194" r="50.500" stroke="#fff"/>
        <path d="M695.500 57v19M732.500 57v18.500H831M695.500 61.500h37M768.500 58v37M813.500 58v38M827.500 76v118M790 194.500h41M772 79.500h-16L701 107.500M817 79.500h-21L740 108.500M755 138.500h-12L728 143.500" stroke="#f4f4f4"/>
      </g>
      <path d="M696 61.500l6-2v4zM732 61.500l-6-2v4zM768.500 75l-2-7h4zM768.500 80l-2 6h4zM813.500 75l-2-7h4zM813.500 80l-2 6h4zM827.500 76l-2 8h4zM827.500 194l-2-8h4zM701 107.500l5-5 2 4zM740 108.500l5-5 2 4zM728 143.500l6-4 1 4z" fill="#fff"/>
      <g class="marks"><text x="701" y="57">ØD4</text><text transform="translate(716 96) rotate(-25)">R1</text><text transform="translate(744 102) rotate(-28)">R2</text><text transform="translate(764 71) rotate(-90)">h1</text><text transform="translate(808 72) rotate(-90)">h2</text><text transform="translate(822 139) rotate(-90)">L</text><text x="746" y="137">r</text></g>
    </svg>
    <fieldset class="params">
      <legend>单位：<b>mm</b></legend>
      <div class="fields">
        <div class="field"><label for="r1">R1：</label><input id="r1" type="text" value="230"></div>
        <div class="field"><label for="d4">D4：</label><input id="d4" type="text" value="150"></div>
        <div class="field"><label for="h1">h1：</label><input id="h1" type="text" value="0"></div>
        <div class="field"><label for="l">L：</label><input id="l" type="text" value="475"></div>
        <div class="field"><label for="r2">R2：</label><input id="r2" type="text" value="180"></div>
        <div class="field"><label for="r">r：</label><input id="r" type="text" value="3"></div>
        <div class="field"><label for="h2">h2：</label><input id="h2" type="text" value="0"></div>
      </div>
      <input class="readonly" type="text" value="0" disabled aria-label="结果">
      <button type="button" class="push adjust">参数调整</button>
    </fieldset>
    <fieldset class="notes">
      <legend>说明</legend>
      <p>对扩散管如不满意，可按下“参<br>数调整 ”按钮修正相关参数，如<b>D4</b>、<br><b>L</b>等，重新设计。如满意，可进入下<br>一步的第<b>9</b>、<b>10</b>断面的设计。</p>
    </fieldset>
    <div class="actions">
      <button type="button" class="push">上一步</button>
      <button type="button" class="push default">下一步</button>
      <button type="button" class="push">取消</button>
    </div>
  </div>
</form>
<script src="script.js"></script>
</body>
</html>
```
FILE: script.js
```js
document.getElementById('d4').focus();
document.getElementById('d4').select();
```
FILE: styles.css
```css
:root {
  --face: #ece9d8;
  --shade: #aca899;
  --cjk: "Noto Sans CJK SC";
  --mono: "Liberation Mono", "Noto Sans CJK SC", monospace;
}
* { box-sizing: border-box; }
body {
  margin: 0;
  padding: 1px 2px 0 1px;
  height: 100vh;
  display: flex;
  flex-direction: column;
  position: relative;
  overflow: hidden;
  background: #f4f6fa;
  color: #111;
  font: 12px/1 "Liberation Sans", var(--cjk), sans-serif;
}
button, input, select { font: inherit; color: inherit; margin: 0; padding: 0; border: 0; background: none; border-radius: 0; }
svg { display: block; flex: none; }
h1, h2, p, fieldset { margin: 0; padding: 0; border: 0; }
.i { width: 18px; height: 18px; fill: none; stroke: #111; }
.i .r { fill: #7c2020; stroke: none; }

/* title and menu */
.titlebar {
  flex: none;
  height: 24px;
  display: flex;
  align-items: center;
  padding: 0 4px 0 2px;
  gap: 4px;
  background: linear-gradient(#a3b9ef, #7a97e0 20%, #7b99e3 65%, #8aa9ec);
  color: #dfe9fb;
}
.app-logo { width: 15px; height: 15px; }
.titlebar h1 { flex: 1; font: bold 12px/24px var(--mono); }
.window-buttons { display: flex; gap: 4px; }
.window-buttons button, .dialog-title button {
  width: 19px;
  height: 19px;
  border: 1px solid #d3dff8;
  border-radius: 3px;
  background: linear-gradient(135deg, #7694e6, #3b5fd0);
}
.window-buttons .close { background: linear-gradient(135deg, #cc8591, #ab5468); }
.window-buttons svg, .dialog-title svg { width: 17px; height: 17px; }
.menubar {
  flex: none;
  height: 19px;
  display: flex;
  align-items: center;
  padding-left: 3px;
  background: #f0edde;
  border-bottom: 1px solid #fff;
  color: #b5b1a1;
}
.doc-logo { width: 15px; height: 15px; margin-right: 6px; }
.menubar button { width: 51px; text-align: left; white-space: nowrap; text-shadow: 1px 1px #fff; font-size: 12px; line-height: 18px; }
.menubar span { font: 10px/12px var(--mono); }
.doc-controls { width: 50px; height: 12px; margin: 0 6px 0 auto; }

/* toolbars */
.toolbar { flex: none; height: 28px; display: flex; align-items: center; padding-left: 3px; background: var(--face); border-top: 1px solid #f8f6ee; }
.toolbar.props { height: 27px; }
.toolbar > button { width: 23px; height: 22px; padding-left: 2px; flex: none; }
.grip { width: 6px; height: 22px; margin-right: 3px; border: solid; border-width: 0 1px; border-color: #fff var(--shade) #fff #fff; background: linear-gradient(90deg, #f5f3e8 1px, var(--shade) 1px, var(--shade) 2px, #fff 2px, #fff 3px, var(--face) 3px); flex: none; }
.grip.thin { width: 4px; margin: 0 2px; }
.sep { width: 2px; height: 20px; margin: 0 1px 0 2px; border-left: 1px solid var(--shade); border-right: 1px solid #fff; flex: none; }
.combo { display: flex; align-items: center; height: 20px; border: 1px solid var(--shade); border-top: 2px solid #99968a; border-left-width: 2px; box-shadow: 1px 1px #fff; flex: none; }
.combo select { flex: 1; min-width: 0; appearance: none; color: #aeaa9b; font: 13px/16px "Liberation Sans", var(--cjk), sans-serif; height: 16px; text-shadow: 1px 1px #fff; }
.layer { width: 168px; margin: 0 2px 0 0; }
.layer-state { width: 74px; height: 16px; }
.color { width: 88px; }
.swatch { width: 12px; height: 12px; margin-left: 1px; }
.line { width: 149px; }
.weight { width: 149px; }
.sample { width: 57px; height: 1px; margin: 0 1px 0 3px; background: #222; flex: none; }
.sample.short { width: 33px; }
.drop { width: 16px; height: 16px; border: 1px solid; border-color: #fff #b8b4a4 #b8b4a4 #fff; }
.drop path { fill: #aaa698; }

/* workspace */
.workspace { flex: 1; min-height: 0; display: flex; background: var(--face); }
.palette { flex: none; width: 24px; margin: 1px 0 0 1px; align-self: flex-start; display: flex; flex-direction: column; align-items: center; padding-bottom: 3px; border: solid; border-width: 0 1px 1px 0; border-color: #c2beaf; }
.palette button { width: 22px; height: 22px; padding-left: 2px; flex: none; }
.palette .text-tool { font: bold 17px/22px "Liberation Serif", serif; padding: 0; }
.hgrip { width: 20px; height: 8px; margin-bottom: 1px; border: solid; border-width: 1px 0; border-color: #fff #fff var(--shade); background: linear-gradient(transparent 2px, var(--shade) 2px, var(--shade) 3px, #fff 3px, #fff 4px, transparent 4px); }
.hsep { width: 20px; height: 2px; margin: 1px 0 2px; border-top: 1px solid var(--shade); border-bottom: 1px solid #fff; }
.palette.dims { width: 25px; margin: 1px 0 0 2px; }
.document { flex: 1; min-width: 0; display: flex; flex-direction: column; margin-left: 1px; border-left: 1px solid #4b4a43; border-top: 1px solid #8f8c80; }
.viewport { flex: 1; min-height: 0; display: flex; background: #000; }
.drawing { flex: 1; min-width: 0; height: 100%; }
.vscroll { width: 17px; display: flex; flex-direction: column; align-items: center; padding: 1px 0; background: #fbfaf5; flex: none; }
.sbtn, .thumb { width: 15px; height: 16px; border: 1px solid #b3c6f0; border-radius: 2px; background: linear-gradient(#d7e2fd, #bccdf8); flex: none; }
.sbtn svg { width: 13px; height: 14px; fill: none; stroke: #4d6185; stroke-width: 2; }
.thumb { background: repeating-linear-gradient(#c7d6fb 0 1px, #a8bdec 1px 2px) center / 7px 8px no-repeat, #c9d7fb; }
.space.up { flex: 13; }
.space.down { flex: 10; }
.tabs { display: flex; height: 15px; background: var(--face); flex: none; }
.raised { width: 16px; height: 15px; border: 1px solid; border-color: #fff var(--shade) var(--shade) #fff; background: var(--face); flex: none; box-shadow: 1px 0 #d5d1c1; }
.tabs > .raised { width: 17px; height: 14px; }
.raised svg { width: 15px; height: 13px; }
.tab { display: grid; place-items: center; height: 14px; font: 12px/13px "Liberation Sans", var(--cjk), sans-serif; white-space: nowrap; }
.tab > * { grid-area: 1 / 1; }
.tab svg { width: 42px; height: 14px; fill: none; stroke: #111; }
.tab.active { margin-left: 3px; color: #fff; font-weight: bold; }
.tab.active svg { width: 38px; fill: #000; }
.track { flex: 1; background: #f3f1e6; }
.tabs .track { background: linear-gradient(90deg, var(--face), #f3f1e6); }
.tabs .corner { width: 18px; }

/* command window */
.splitter { flex: none; height: 7px; background: #e7e1d5; border-top: 2px solid #111; border-bottom: 2px solid #111; }
.command { flex: none; margin-left: 1px; padding-top: 1px; height: 59px; border-left: 2px solid #222; border-bottom: 1px solid #bbb8ab; background: var(--face); }
.history { display: flex; height: 41px; padding-right: 3px; border-top: 1px solid #777; border-bottom: 1px solid #bbb; background: #fff; }
.log { flex: 1; min-width: 0; padding-left: 2px; font: 13px/13px var(--mono); }
.log p { height: 13px; overflow: hidden; white-space: pre; }
.vscroll.small { justify-content: space-between; }
.prompt { display: flex; height: 16px; padding-right: 22px; }
.prompt input { flex: 1; min-width: 0; background: #fff; outline: 0; font: 13px/16px var(--mono); }
.prompt .track { flex: none; width: 14px; }

/* status bar */
.status { flex: none; height: 23px; display: flex; align-items: flex-end; gap: 4px; padding-left: 9px; background: var(--face); font: 15px/18px "Liberation Sans", var(--cjk), sans-serif; }
.coords { width: 297px; height: 20px; padding-left: 2px; border: 1px solid; border-color: var(--shade) #fff #fff var(--shade); color: #aaa698; font: bold 13px/20px "Liberation Sans", sans-serif; white-space: pre; }
.status button { height: 18px; line-height: 18px; box-shadow: 1px 1px #cbc7b8; white-space: nowrap; }
.status .on { height: 19px; border: solid #222; border-width: 1px 0 0 1px; box-shadow: 1px 0 #222; }

/* taskbar */
.taskbar { flex: none; height: 31px; display: flex; align-items: stretch; background: linear-gradient(#3069d6, #4791f3 10%, #2a66df 25%, #245bdb 85%, #1d4ec0); color: #fff; font: 11px/30px var(--mono); }
.start { width: 91px; display: flex; align-items: center; padding: 0 0 0 9px; gap: 6px; border-radius: 0 8px 10px 0; background: linear-gradient(#4e9f4d 0, #5aad56 12%, #358f36 35%, #349333 80%, #277427); box-shadow: inset -3px 0 3px #1f6d28; }
.start svg { width: 19px; height: 19px; }
.start em { font: italic 18px/24px var(--cjk), sans-serif; text-shadow: 1px 1px 1px #174d17; }
.quick { width: 78px; display: flex; align-items: center; justify-content: space-between; padding: 3px 4px 0 8px; }
.quick svg, .lang svg { width: 16px; height: 16px; }
.quick button { margin-right: 2px; }
.quick .dots { margin-right: 8px; }
.quick .dots:last-child { margin: 0 0 0 8px; }
.dots { width: 4px; height: 18px; background: repeating-linear-gradient(transparent 0 2px, #173f9f 2px 4px); }
.task { width: 150px; margin-top: 4px; display: flex; align-items: center; gap: 4px; padding-left: 8px; border-radius: 2px; background: linear-gradient(#5c9bfb, #3b7ff1 20%, #3a7bee); color: #f4f8ff; font: 10px/26px var(--mono); text-align: left; white-space: nowrap; overflow: hidden; }
.task.current { background: #1e50b6; box-shadow: inset 1px 1px 1px #123783; }
.task svg { width: 16px; height: 16px; }
.lang { margin-left: auto; display: flex; align-items: center; gap: 9px; padding: 3px 11px 0 0; }
.tray { width: 73px; display: flex; align-items: center; gap: 6px; padding: 3px 0 0 9px; border-left: 1px solid #0d3f9c; background: linear-gradient(#2a7be4, #1d9df2 15%, #149ae9 80%, #1482cc); }
.tray svg { width: 17px; height: 17px; }
.tray time { font: 11px/24px var(--mono); }

/* parameter dialog */
.dialog { position: absolute; left: 583px; top: 2px; width: 304px; border: 3px solid #1645b5; border-top: 0; border-radius: 7px 7px 0 0; background: var(--face); box-shadow: inset 1px 0 #3b76e8; }
.dialog-title { display: flex; align-items: center; justify-content: space-between; height: 26px; margin: 0 -3px; padding: 0 4px 0 6px; border-radius: 7px 7px 0 0; background: linear-gradient(#0a47be, #3787f7 10%, #0857dd 30%, #0761f3 70%, #0553d8); color: #fff; }
.dialog-title h2 { font: bold 13px/26px var(--cjk), sans-serif; }
.dialog-title button { border-color: #fff; background: linear-gradient(135deg, #ec9276, #d44b24 60%, #b93a18); width: 20px; height: 20px; }
.dialog-title button svg { width: 18px; height: 18px; }
.dialog-body { padding: 10px 13px 11px 7px; display: flex; flex-direction: column; }
.preview { align-self: stretch; margin: 0 0 0 6px; background: #000; border-left: 1px solid #777; border-top: 1px solid #777; }
.marks { fill: #fff; font: 12px "Liberation Serif", serif; }
fieldset { position: relative; min-width: 0; border: 1px solid #b9b5a4; box-shadow: inset 1px 1px #fff, 1px 1px #fff; }
fieldset.params { margin-top: 6px; }
legend { margin-left: 5px; padding: 0 3px; font: 15px/16px var(--cjk), sans-serif; }
legend b, .notes b { font: bold 13px/1 "Liberation Sans", sans-serif; }
.notes b { line-height: 0; }
.params { display: flex; flex-direction: column; padding-bottom: 4px; }
.fields { display: grid; grid-template-columns: 126px 126px; gap: 8px 10px; margin-top: 9px; }
.field { display: flex; align-items: center; }
.field label { width: 50px; padding-left: 4px; text-align: center; font: bold 13px/26px "Liberation Sans", var(--cjk), sans-serif; white-space: nowrap; }
.field input, .readonly { width: 76px; height: 26px; padding-bottom: 4px; border: solid; border-width: 2px 1px 1px 2px; border-color: #77746a #fff #fff #77746a; background: #fff; text-align: center; font: bold 13px/16px "Liberation Sans", sans-serif; outline: 0; }
input::selection { background: #316ac5; color: #fff; }
.readonly { display: block; width: 42px; height: 28px; margin: 3px 9px 0 auto; background: var(--face); color: var(--shade); }
.push { height: 27px; padding: 0; border: 1px solid; border-color: #fff #8b887b #8b887b #fff; background: var(--face); box-shadow: 1px 1px #716f64; font: 15px/24px var(--cjk), sans-serif; }
.adjust { display: block; width: 95px; margin: 0 auto; }
fieldset.notes { margin-top: 7px; padding: 4px 0 13px; }
.notes p { padding-left: 14px; text-indent: 30px; font: 15px/16px var(--cjk), sans-serif; white-space: nowrap; }
.actions { display: grid; grid-template-columns: 64px 79px 66px; column-gap: 30px; margin-top: 10px; }
.actions .push:last-child { margin: 0 -10px 0 10px; }
.push.default { border-color: #111; box-shadow: inset 1px 1px #fff, inset -1px -1px #8b887b; }
```
